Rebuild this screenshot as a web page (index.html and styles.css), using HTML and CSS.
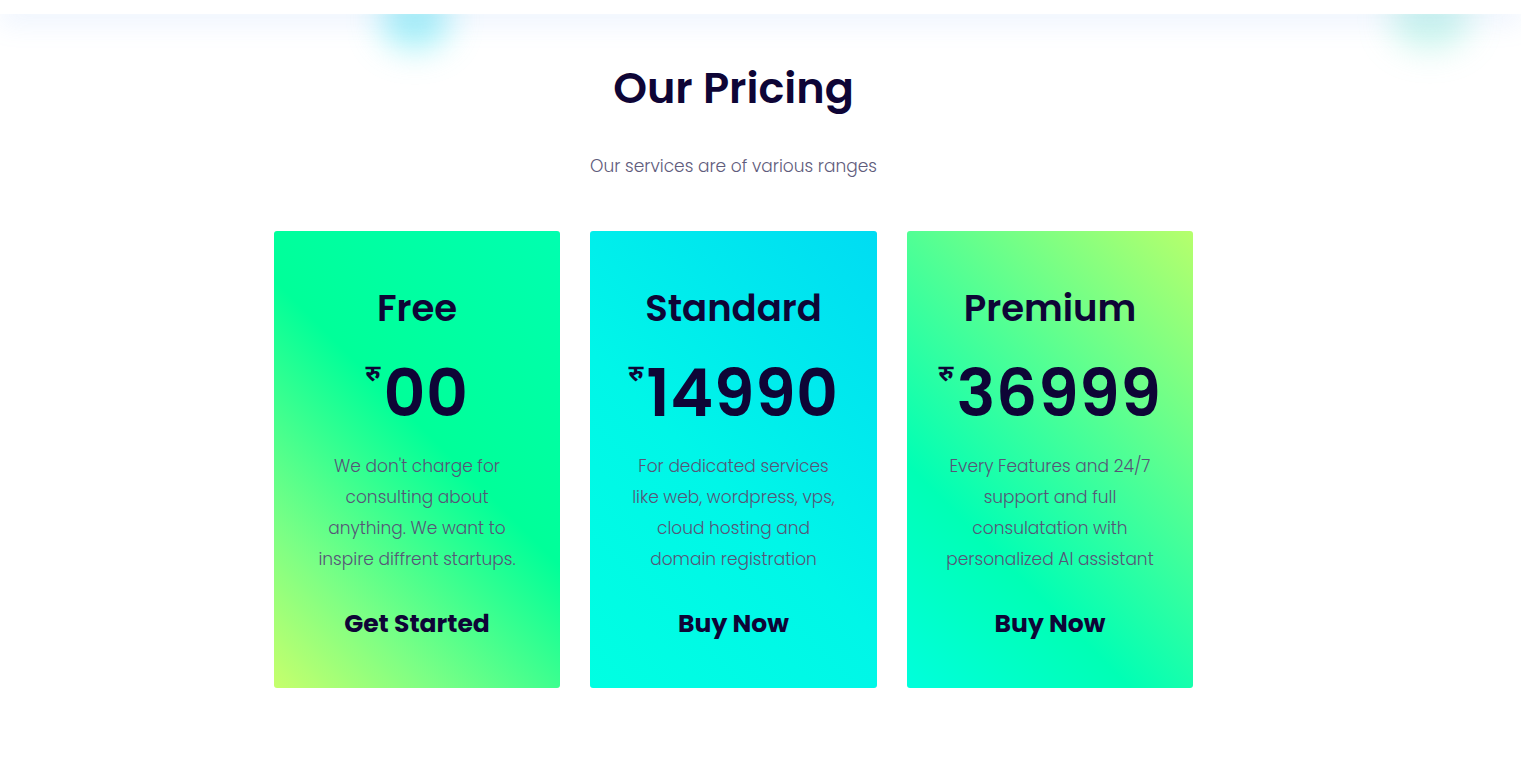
FILE: index.html
```html
<!DOCTYPE html>
<html lang="en">
<head>
<meta charset="utf-8">
<title>Our Pricing</title>
<link rel="stylesheet" href="styles.css">
</head>
<body>
<header class="topbar"></header>
<div class="glow glow-left"></div>
<div class="glow glow-right"></div>
<section class="pricing">
  <h2 class="pricing-title">Our Pricing</h2>
  <p class="pricing-sub">Our services are of various ranges</p>
  <div class="plans">
    <div class="plan plan-free">
      <h3 class="plan-name">Free</h3>
      <div class="plan-price"><span class="cur">रु</span><span class="amount">00</span></div>
      <p class="plan-desc">We don't charge for consulting about anything. We want to inspire diffrent startups.</p>
      <a class="plan-btn" href="#">Get Started</a>
    </div>
    <div class="plan plan-standard">
      <h3 class="plan-name">Standard</h3>
      <div class="plan-price"><span class="cur">रु</span><span class="amount">14990</span></div>
      <p class="plan-desc">For dedicated services like web, wordpress, vps, cloud hosting and domain registration</p>
      <a class="plan-btn" href="#">Buy Now</a>
    </div>
    <div class="plan plan-premium">
      <h3 class="plan-name">Premium</h3>
      <div class="plan-price"><span class="cur">रु</span><span class="amount">36999</span></div>
      <p class="plan-desc">Every Features and 24/7 support and full consulatation with personalized AI assistant</p>
      <a class="plan-btn" href="#">Buy Now</a>
    </div>
  </div>
</section>
</body>
</html>
```
FILE: styles.css
```css
* { box-sizing: border-box; }
html, body { margin: 0; padding: 0; }
body {
  background: #ffffff;
  font-family: "Poppins", "Inter", "Noto Sans", "DejaVu Sans", sans-serif;
  color: #0e0536;
  overflow: hidden;
  position: relative;
  min-height: 775px;
}
.topbar {
  height: 14px;
  background: #ffffff;
  position: relative;
  z-index: 3;
  box-shadow: 0 6px 28px rgba(120, 170, 245, 0.22);
}
.glow {
  position: absolute;
  top: -10px;
  width: 70px;
  height: 60px;
  border-radius: 50%;
  filter: blur(16px);
  z-index: 1;
}
.glow-left { left: 380px; background: rgba(60, 225, 240, 0.45); }
.glow-right { left: 1390px; width: 80px; background: rgba(90, 225, 200, 0.3); }
.pricing {
  position: relative;
  z-index: 2;
  padding: 44px 54px 0 0;
  display: flex;
  flex-direction: column;
  align-items: center;
}
.pricing-title {
  margin: 0;
  font-size: 43px;
  font-weight: 600;
  line-height: 60px;
  color: #0e0536;
}
.pricing-sub {
  margin: 36px 0 0;
  font-size: 17px;
  font-weight: 300;
  line-height: 24px;
  color: #5f5c7c;
}
.plans {
  margin-top: 53px;
  display: flex;
  gap: 30px;
}
.plan {
  width: 286px;
  height: 457px;
  border-radius: 3px;
  padding: 52px 38px 0;
  display: flex;
  flex-direction: column;
  align-items: center;
  text-align: center;
}
.plan-standard { width: 287px; }
.plan-free { background: linear-gradient(45deg, #c6ff6c 0%, #7bff85 22%, #00ff99 55%, #00ffb0 100%); }
.plan-standard { background: linear-gradient(45deg, #00ffe2 0%, #00f6e8 45%, #00dcf3 100%); }
.plan-premium { background: linear-gradient(225deg, #b6ff6c 0%, #4dff96 40%, #00ffb5 70%, #00ffdc 100%); }
.plan-name {
  margin: 0;
  font-size: 37px;
  font-weight: 600;
  line-height: 50px;
  color: #0e0536;
}
.plan-price {
  margin-top: 29px;
  display: flex;
  align-items: flex-start;
  justify-content: center;
  line-height: 1;
}
.cur {
  font-family: "Noto Sans Devanagari", "Noto Sans", "FreeSans", sans-serif;
  font-size: 23px;
  font-weight: 700;
  margin-top: 2px;
  margin-right: 3px;
}
.amount {
  font-size: 65px;
  font-weight: 600;
  line-height: 64px;
  letter-spacing: 0.5px;
}
.plan-desc {
  margin: 25px 0 0;
  font-size: 17px;
  font-weight: 300;
  line-height: 31px;
  color: #575577;
}
.plan-btn {
  margin-top: 33px;
  font-size: 25px;
  font-weight: 700;
  color: #0e0536;
  text-decoration: none;
  line-height: 32px;
}
```
